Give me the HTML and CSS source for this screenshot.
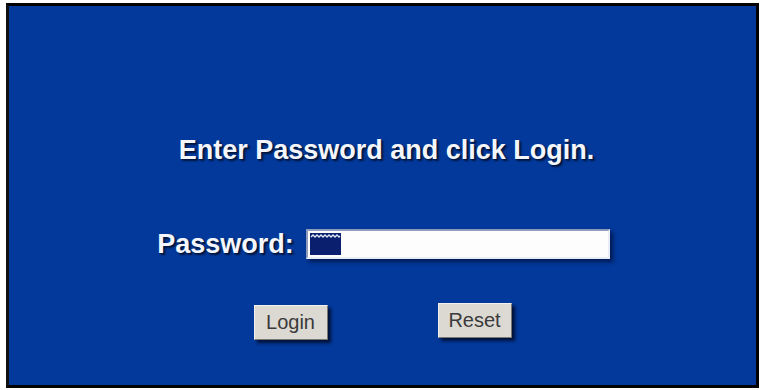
FILE: index.html
```html
<!DOCTYPE html>
<html>
<head>
<meta charset="utf-8">
<title>Login</title>
<link rel="stylesheet" href="styles.css">
</head>
<body>
<div class="frame">
  <div class="title">Enter Password and click Login.</div>
  <div class="pwrow">
    <span class="label">Password:</span>
    <div class="input">
      <svg class="mask" width="31" height="22" viewBox="0 0 31 22">
        <rect x="0" y="0" width="31" height="22" fill="#0a1f6e"/>
        <path d="M1 4 L3 2 L5 4 L7 2 L9 4 L11 2 L13 4 L15 2 L17 4 L19 2 L21 4 L23 2 L25 4 L27 2 L29 4 L30 3" fill="none" stroke="#dfe6f5" stroke-width="1.3"/>
      </svg>
    </div>
  </div>
  <div class="buttons">
    <button class="btn btn-login">Login</button>
    <button class="btn">Reset</button>
  </div>
</div>
</body>
</html>
```
FILE: styles.css
```css
html, body {
  margin: 0;
  padding: 0;
  background: #ffffff;
}
body {
  width: 762px;
  height: 390px;
  overflow: hidden;
}
.frame {
  box-sizing: border-box;
  margin: 3px 0 0 6px;
  width: 753px;
  height: 385px;
  border: 3px solid #000;
  border-left: 3px solid #111;
  background: #03399a;
  display: flex;
  flex-direction: column;
  align-items: center;
  padding-top: 129px;
  font-family: "Liberation Sans", Arial, sans-serif;
}
.title {
  color: #f4f6fb;
  font-weight: bold;
  font-size: 27px;
  line-height: 30px;
  padding-left: 8px;
  text-shadow: 2px 2px 2px #00163f, 1px 1px 1px #001a4a;
}
.pwrow {
  margin-top: 64px;
  display: flex;
  align-items: center;
  gap: 12px;
  padding-left: 2px;
}
.label {
  color: #f4f6fb;
  font-weight: bold;
  font-size: 27px;
  line-height: 30px;
  text-shadow: 2px 2px 2px #00163f, 1px 1px 1px #001a4a;
}
.input {
  box-sizing: border-box;
  width: 304px;
  height: 30px;
  background: #fdfdfd;
  border-top: 2px solid #8f9bbd;
  border-left: 2px solid #8f9bbd;
  border-right: 2px solid #e8ecf4;
  border-bottom: 2px solid #e8ecf4;
  box-shadow: 3px 3px 4px #001a55;
  display: flex;
  align-items: center;
  padding-left: 2px;
}
.mask {
  display: block;
}
.buttons {
  margin-top: 44px;
  display: flex;
  align-items: flex-start;
  gap: 110px;
}
.btn {
  box-sizing: border-box;
  width: 74px;
  height: 35px;
  background: #dcd9d3;
  color: #3a3a3a;
  font-family: "Liberation Sans", Arial, sans-serif;
  font-size: 20px;
  border: 1px solid #f2f1ee;
  border-right-color: #7a7873;
  border-bottom-color: #7a7873;
  box-shadow: 3px 3px 3px #00113a;
  padding: 0;
  margin: 0;
}
.btn-login {
  margin-top: 2px;
}
```
